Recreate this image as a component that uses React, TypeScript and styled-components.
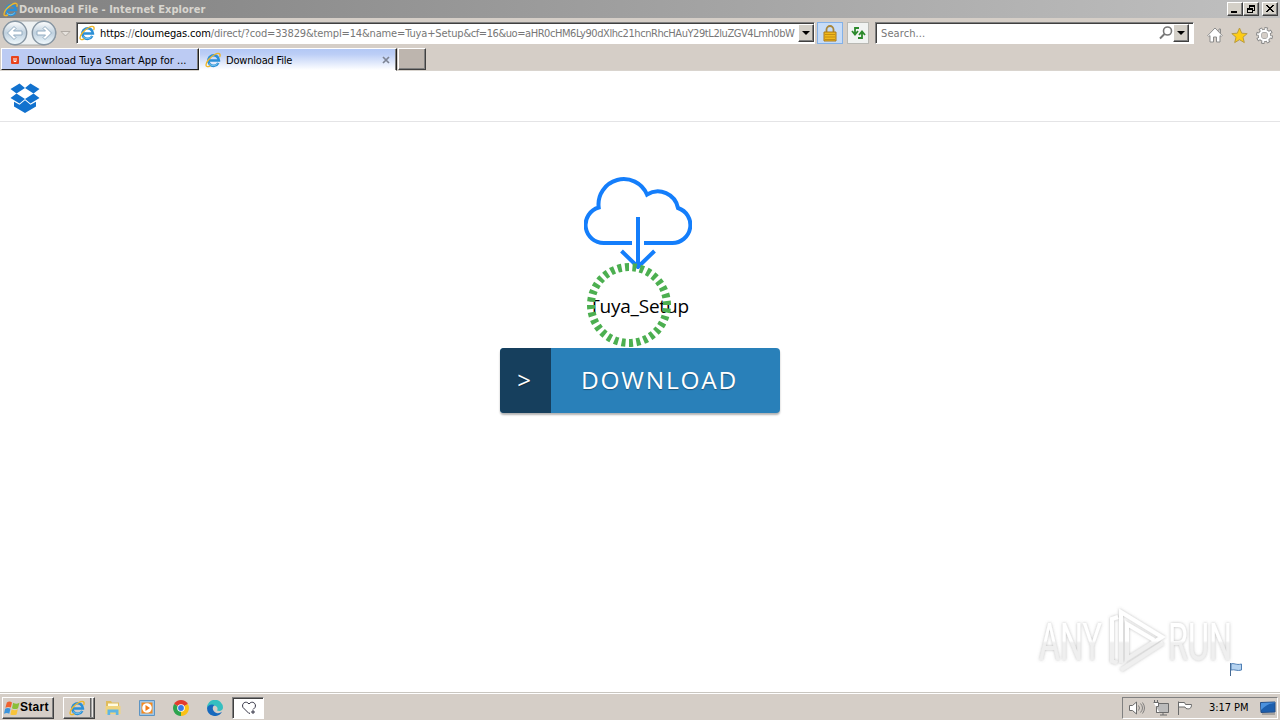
import { ReactNode } from 'react';
import styled, { createGlobalStyle, css } from 'styled-components';

type $TextProps = {
  size?: number;
  spacing?: number;
  color?: string;
  bold?: boolean;
};

const GlobalStyle = createGlobalStyle`
  * {
    box-sizing: border-box;
  }
  body {
    margin: 0;
    overflow: hidden;
    background: #fff;
    font-family: 'DejaVu Sans Condensed', 'DejaVu Sans', sans-serif;
    font-size: 11px;
  }
  svg {
    display: block;
    flex-shrink: 0;
  }
`;

const raised = css`
  border: 1px solid;
  border-color: #fff #404040 #404040 #fff;
  box-shadow: inset -1px -1px 0 #808080;
`;

const sunken = css`
  border: 1px solid;
  border-color: #808080 #fff #fff #808080;
  box-shadow: inset 1px 1px 0 #404040;
`;

const Screen = styled.div`
  display: flex;
  flex-direction: column;
  width: 1280px;
  height: 720px;
  overflow: hidden;
`;

const Label = styled.span.withConfig({
  shouldForwardProp: (prop) => !['size', 'spacing', 'color', 'bold'].includes(prop)
})<$TextProps>`
  font-size: ${({ size = 11 }) => size}px;
  letter-spacing: ${({ spacing = 0 }) => spacing}px;
  color: ${({ color = '#000' }) => color};
  font-weight: ${({ bold }) => (bold ? 700 : 400)};
  white-space: pre;
`;

/* window chrome */
const TitleBar = styled.header`
  display: flex;
  align-items: center;
  height: 18px;
  padding: 0 2px 0 3px;
  background: linear-gradient(90deg, #808080, #c0c0c0);
`;

const TitleText = styled.h1`
  flex: 1;
  margin: 0 0 0 1px;
  font-size: 11px;
  font-weight: 700;
  letter-spacing: 0.02px;
  color: #d8d5cf;
`;

const WindowButton = styled.button<{ $gap?: number }>`
  ${raised}
  display: flex;
  align-items: center;
  justify-content: center;
  width: 16px;
  height: 14px;
  margin: 0 0 0 ${({ $gap = 0 }) => $gap}px;
  padding: 0;
  background: #d4d0c8;
`;

const Toolbar = styled.div`
  display: flex;
  align-items: center;
  height: 30px;
  padding: 0 7px 0 1px;
  background: #d5cec7;
`;

const NavButtons = styled.div`
  display: flex;
  width: 75px;
`;

const Field = styled.div<{ $width: number; $gap?: number }>`
  ${sunken}
  display: flex;
  align-items: center;
  width: ${({ $width }) => $width}px;
  height: 22px;
  margin-left: ${({ $gap = 0 }) => $gap}px;
  padding: 0 0 0 2px;
  background: #fff;
`;

const FieldText = styled.div<{ $inset?: number }>`
  flex: 1;
  min-width: 0;
  margin-left: ${({ $inset = 5 }) => $inset}px;
  padding-top: 1px;
  white-space: nowrap;
`;

const DropButton = styled.button<{ $gap?: number }>`
  ${raised}
  display: flex;
  align-items: center;
  justify-content: center;
  width: 16px;
  height: 18px;
  margin: 0 ${({ $gap = 0 }) => $gap}px 0 0;
  padding: 0;
  background: #d4d0c8;
`;

const IconBox = styled.div<{ $active?: boolean }>`
  display: flex;
  align-items: center;
  justify-content: center;
  width: ${({ $active }) => ($active ? 26 : 22)}px;
  height: 22px;
  margin-left: ${({ $active }) => ($active ? 2 : 4)}px;
  border: 1px solid ${({ $active }) => ($active ? '#83b1e8' : '#b9b9b4')};
  background: ${({ $active }) => ($active ? '#c7dcf7' : '#f1f3f2')};
`;

const ToolIcons = styled.div`
  display: flex;
  flex: 1;
  justify-content: space-between;
  margin-left: 13px;
  padding-top: 4px;
`;

const TabStrip = styled.nav`
  display: flex;
  align-items: flex-start;
  height: 23px;
  padding-left: 1px;
  background: #d5cec7;
  border-bottom: 1px solid #d9d4ce;
`;

const Tab = styled.div<{ $width: number; $active?: boolean }>`
  display: flex;
  align-items: center;
  width: ${({ $width }) => $width}px;
  height: ${({ $active }) => ($active ? 23 : 22)}px;
  padding: 1px 6px 0 ${({ $active }) => ($active ? 5 : 4)}px;
  border: 1px solid;
  border-color: #fff #202020 ${({ $active }) => ($active ? '#fff' : '#202020')} #fff;
  box-shadow: inset -1px 0 0 #808080;
  background: ${({ $active }) =>
    $active ? 'linear-gradient(#b3c8f5 0%, #bccef6 25%, #edf2fd 80%, #fff 100%)' : '#bccbf3'};
`;

const TabText = styled(Label)`
  flex: 1;
  margin-left: 5px;
  padding-top: 1px;
`;

const NewTab = styled.div`
  ${raised}
  width: 28px;
  height: 22px;
  margin-left: 1px;
  background: #bdb5ae;
`;

/* page */
const Page = styled.main`
  position: relative;
  display: flex;
  flex: 1;
  flex-direction: column;
  align-items: center;
  background: #fff;
`;

const PageHeader = styled.div`
  align-self: stretch;
  height: 51px;
  padding: 12px 10px;
  border-bottom: 1px solid #e4e4e6;
`;

const CloudWrap = styled.div`
  margin: 53px 4px 0 0;
`;

const FileName = styled.h2`
  margin: 23px 2px 0 0;
  height: 28px;
  font: 400 19px/28px 'Open Sans', sans-serif;
  letter-spacing: -0.2px;
  color: #000;
`;

const DownloadButton = styled.button`
  display: flex;
  width: 280px;
  height: 65px;
  margin-top: 28px;
  padding: 0;
  border: 0;
  border-radius: 4px;
  background: #2980b9;
  box-shadow: 0 2px 2px rgba(0, 0, 0, 0.3);
  color: #fff;
  font: 400 24px/64px 'Open Sans', sans-serif;
  text-shadow: 0 1px 1px rgba(0, 0, 0, 0.35);
  overflow: hidden;
`;

const Chevron = styled.span`
  width: 51px;
  height: 65px;
  padding-right: 3px;
  background: #163f5d;
  text-align: center;
`;

const ButtonText = styled.span`
  padding-left: 30px;
  font-size: 24.5px;
  letter-spacing: 1.75px;
`;

const Ring = styled.div`
  position: absolute;
  top: 191px;
  left: 586px;
`;

const Watermark = styled.div`
  position: absolute;
  top: 533px;
  left: 1030px;
`;

const PageFlag = styled.div`
  position: absolute;
  top: 591px;
  left: 1229px;
`;

/* taskbar */
const Taskbar = styled.footer`
  display: flex;
  align-items: center;
  height: 28px;
  padding: 2px 2px 0;
  border-top: 1px solid #c9c6c0;
  box-shadow: inset 0 1px 0 #fff;
  background: #d5cec7;
`;

const StartButton = styled.button`
  ${raised}
  display: flex;
  align-items: center;
  width: 52px;
  height: 22px;
  padding: 0 2px 1px 1px;
  background: #d5cec7;
`;

const TaskGroup = styled.div`
  ${raised}
  display: flex;
  align-items: center;
  width: 32px;
  height: 22px;
  margin-left: 9px;
  margin-right: 1px;
  padding-left: 5px;
  background: linear-gradient(90deg, #d5cec7 26px, #808080 26px, #404040 27px, #fff 28px, #d5cec7 29px);
`;

const Launcher = styled.div`
  display: flex;
  align-items: center;
  justify-content: center;
  width: 34px;
`;

const ActiveTask = styled.div`
  ${sunken}
  display: flex;
  align-items: center;
  justify-content: center;
  width: 32px;
  height: 22px;
  padding-left: 1px;
  background: #fff;
`;

const Tray = styled.div`
  display: flex;
  align-items: center;
  width: 156px;
  height: 22px;
  margin-left: auto;
  padding-left: 6px;
  border: 1px solid;
  border-color: #808080 #fff #fff #808080;
`;

const Clock = styled.time`
  margin: 0 11px 0 14px;
  letter-spacing: -0.05px;
  white-space: nowrap;
`;

const IeIcon = ({ size = 16 }: { size?: number }) => (
  <svg width={size} height={size} viewBox="0 0 16 16" fill="none">
    <path d="M13.300 11a5.300 5.300 0 1 1 .6-2.500H4.200" stroke="#2b8fd6" strokeWidth="2.600" />
    <path d="M12.600 11.300A5.300 5.300 0 0 1 4 11.500" stroke="#7fcdf3" strokeWidth=".9" />
    <path d="M14.700 5C16 1.500 13.800.2 9.800 2.500 5 5 1.200 9.800 1 13c0 2 2 2 4.300.8" stroke="#efb72b" strokeWidth="1.400" />
  </svg>
);

const NavArrow = ({ flip }: { flip?: boolean }) => (
  <g transform={flip ? 'translate(57 0) scale(-1 1)' : undefined}>
    <circle cx="14" cy="13" r="11.700" fill="url(#glass)" stroke="#8796a3" strokeWidth="1.400" />
    <path
      d="M6.500 13l6.500-6.500 2 2-2.500 2.500H21v4h-8.500l2.500 2.500-2 2z"
      fill="#fff"
      stroke="#93adc2"
      strokeWidth="1"
    />
  </g>
);

const DownArrow = () => (
  <svg width="8" height="4" viewBox="0 0 8 4">
    <path d="M0 0h8L4 4z" fill="#000" />
  </svg>
);

const WinButton = ({ gap, children }: { gap?: number; children: ReactNode }) => (
  <WindowButton $gap={gap}>
    <svg width="12" height="10" viewBox="0 0 12 10" shapeRendering="crispEdges">
      {children}
    </svg>
  </WindowButton>
);

const App = () => (
  <Screen>
    <GlobalStyle />
    <TitleBar>
      <IeIcon size={15} />
      <TitleText>Download File - Internet Explorer</TitleText>
      <WinButton>
        <path d="M2 7h6v2H2z" />
      </WinButton>
      <WinButton>
        <path d="M4 1h6v2H4zM9 3h1v4H8V6h1zM4 3h1v1H4zM2 4h6v2H2zM2 6h1v3H2zM7 6h1v3H7zM2 8h6v1H2z" />
      </WinButton>
      <WinButton gap={3}>
        <path d="M2 1h2v1h1v1h2V2h1V1h2v1H9v1H8v1H7v1h1v1h1v1h1v1H8V7H7V6H5v1H4v1H2V7h1V6h1V5h1V4H4V3H3V2H2z" />
      </WinButton>
    </TitleBar>

    <Toolbar>
      <NavButtons>
        <svg width="70" height="27" viewBox="0 0 70 27">
          <defs>
            <linearGradient id="glass" x1="0" y1="0" x2="0" y2="1">
              <stop offset="0" stopColor="#fff" />
              <stop offset=".5" stopColor="#bfd0de" />
              <stop offset="1" stopColor="#f2fbff" />
            </linearGradient>
          </defs>
          <path d="M14 1h29a12 12 0 0 1 0 24H14A12 12 0 0 1 14 1z" fill="#eef1f2" stroke="#a9aaa8" />
          <NavArrow />
          <NavArrow flip />
          <path d="M60 11.500h9l-4.500 4.500z" fill="#e6e2dd" stroke="#aaa59e" strokeWidth=".9" />
        </svg>
      </NavButtons>
      <Field $width={739}>
        <IeIcon />
        <FieldText>
          <Label spacing={-0.12}>https</Label>
          <Label spacing={-0.12} color="#777">
            ://
          </Label>
          <Label spacing={-0.14}>cloumegas.com</Label>
          <Label spacing={-0.14} color="#777">
            /direct/?cod=33829&amp;templ=14&amp;name=Tuya+Setup
          </Label>
          <Label spacing={-0.43} color="#777">
            &amp;cf=16&amp;uo=aHR0cHM6Ly90dXlhc21hcnRhcHAuY29tL2luZGV4Lmh0bW
          </Label>
        </FieldText>
        <DropButton>
          <DownArrow />
        </DropButton>
      </Field>
      <IconBox $active>
        <svg width="14" height="17" viewBox="0 0 14 17">
          <path d="M3.500 8V4.500a3.500 3.500 0 0 1 7 0V8" fill="none" stroke="#a8863a" strokeWidth="1.800" />
          <path d="M1 7h12v9H1z" fill="#f0b91d" stroke="#a9791a" />
          <path d="M2 9.500h10M2 12h10M2 14.500h10" stroke="#c58e12" />
        </svg>
      </IconBox>
      <IconBox>
        <svg width="17" height="16" viewBox="0 0 17 16" fill="none" stroke="#2c8a2c" strokeWidth="1.800">
          <path d="M9 3H5v6M2 6l3 3.500L8 6" />
          <path d="M8 13h4V7M9 10l3-3.500L15 10" />
        </svg>
      </IconBox>
      <Field $width={319} $gap={6}>
        <FieldText $inset={3}>
          <Label color="#777" spacing={0.1}>
            Search...
          </Label>
        </FieldText>
        <svg width="14" height="14" viewBox="0 0 14 14" fill="none" stroke="#777" strokeWidth="1.600">
          <circle cx="8.500" cy="5" r="4" />
          <path d="M5.500 8L1 12.500" strokeWidth="2" />
        </svg>
        <DropButton $gap={4}>
          <DownArrow />
        </DropButton>
      </Field>
      <ToolIcons>
        <svg width="16" height="16" viewBox="0 0 16 16" fill="#fff" stroke="#8b8b8b">
          <path d="M12 5V2h1.500v5" />
          <path d="M.8 8.500L8 1l7.200 7.500-1 1L13 8.600V15H9.500v-5h-3v5H3V8.600L1.800 9.500z" />
        </svg>
        <svg width="17" height="17" viewBox="0 0 17 17">
          <path
            d="M8.500 1l2.200 5.200 5.500.4-4.200 3.600 1.300 5.400-4.800-2.900-4.800 2.900L5 10.200.8 6.600l5.500-.4z"
            fill="#fdcc15"
            stroke="#b89b42"
          />
        </svg>
        <svg width="17" height="17" viewBox="0 0 17 17" fill="none">
          <circle cx="8.500" cy="8.500" r="6.500" stroke="#888" strokeWidth="4" pathLength="80" strokeDasharray="6 4" />
          <circle cx="8.500" cy="8.500" r="4.800" stroke="#888" strokeWidth="3.600" />
          <circle
            cx="8.500"
            cy="8.500"
            r="6"
            stroke="#fff"
            strokeWidth="3"
            pathLength="80"
            strokeDasharray="3.400 6.600"
            strokeDashoffset="-1.300"
          />
          <circle cx="8.500" cy="8.500" r="4.600" stroke="#fff" strokeWidth="2.400" />
        </svg>
      </ToolIcons>
    </Toolbar>

    <TabStrip>
      <Tab $width={198}>
        <svg width="16" height="8" viewBox="-5 0 16 8">
          <rect width="8" height="8" rx="1" fill="#e8431c" />
          <path d="M3 2v3.500h2V2" fill="none" stroke="#fff" />
        </svg>
        <TabText spacing={-0.01}>Download Tuya Smart App for ...</TabText>
      </Tab>
      <Tab $width={198} $active>
        <IeIcon />
        <TabText spacing={-0.2}>Download File</TabText>
        <svg width="8" height="8" viewBox="0 0 8 8">
          <path d="M1 1l6 6M7 1L1 7" stroke="#7d8494" strokeWidth="1.700" />
        </svg>
      </Tab>
      <NewTab />
    </TabStrip>

    <Page>
      <PageHeader>
        <svg width="30" height="30" viewBox="0 0 30 30" fill="#1272ce">
          <path d="M9.500.5L15 5l-8.500 5.500L.5 6zM20.500.5L15 5l8.500 5.500 6-4.500z" />
          <path d="M6.500 10.500L15 16l-5.500 4.500L.5 15zM23.500 10.500L15 16l5.500 4.500 9-5.500z" />
          <path d="M15 17.300l-5.500 4.500L4 18.800v4.700l11 6.500 11-6.500v-4.700l-5.500 3z" />
        </svg>
      </PageHeader>
      <CloudWrap>
        <svg width="108" height="94" viewBox="584 175 108 94" fill="none" stroke="#147efb" strokeWidth="4">
          <path d="M632 243H604A18.100 18.100 0 0 1 598.700 207.500A25.250 25.250 0 0 1 647 194.500A20.500 20.500 0 0 1 678 208A17.950 17.950 0 0 1 672 243H644" />
          <path d="M638 217v49M621.500 251L638 267l16.500-16" />
        </svg>
      </CloudWrap>
      <FileName>Tuya_Setup</FileName>
      <DownloadButton>
        <Chevron>&gt;</Chevron>
        <ButtonText>DOWNLOAD</ButtonText>
      </DownloadButton>
      <Ring>
        <svg width="86" height="86" viewBox="0 0 86 86">
          <circle
            cx="43"
            cy="43"
            r="38"
            fill="none"
            stroke="#4caf50"
            strokeWidth="8"
            pathLength="320"
            strokeDasharray="5.400 4.600"
            transform="rotate(-6 43 43)"
          />
        </svg>
      </Ring>
      <Watermark>
        <svg width="220" height="75" viewBox="0 0 220 75">
          <defs>
            <filter id="soft" x="-10%" y="-20%" width="120%" height="140%">
              <feDropShadow dx="0" dy="0" stdDeviation="1.500" floodColor="#777" floodOpacity=".5" />
            </filter>
            <linearGradient id="fade" x1="0" y1="0" x2="0" y2="75" gradientUnits="userSpaceOnUse">
              <stop offset=".49" stopColor="#fff" />
              <stop offset=".52" stopColor="#efefef" />
            </linearGradient>
          </defs>
          <g filter="url(#soft)" fill="url(#fade)" fontFamily="Roboto, sans-serif" fontSize="52">
            <text x="9" y="56" textLength="63" lengthAdjust="spacingAndGlyphs">
              ANY
            </text>
            <text x="138" y="56" textLength="64" lengthAdjust="spacingAndGlyphs">
              RUN
            </text>
            <g fill="none" stroke="url(#fade)" strokeWidth="4">
              <path d="M88 13l-6 2v42l5 2" />
              <path d="M91 59V8l41 25L97 55V20l27 16" />
              <path d="M91 66l42-27" />
            </g>
          </g>
        </svg>
      </Watermark>
      <PageFlag>
        <svg width="14" height="15" viewBox="0 0 14 15">
          <path d="M2 2c3-1.500 5 1.500 10.500 0v6C8 9.500 6 7 2 8z" fill="#b5d3f0" stroke="#4f7fb5" />
          <path d="M1.500 1v13" stroke="#456a94" />
        </svg>
      </PageFlag>
    </Page>

    <Taskbar>
      <StartButton>
        <svg width="16" height="16" viewBox="0 0 14 14">
          <path d="M2.500 3C4 2 5.500 2 7 3L6 7.500C4.500 6.700 3 6.700 1.200 7.600z" fill="#ef6330" />
          <path d="M8 3.300c2 1 3.500 1 5.500 0L12.300 8c-1.800 1-3.500 1-5.300 0z" fill="#8abf38" />
          <path d="M1 8.500c1.600-.9 3.200-.9 4.700 0L4.600 13C3.200 12 1.700 12 0 13z" fill="#3b94dc" />
          <path d="M6.700 9c1.800 1 3.500 1 5.400 0L11 13.500c-1.900 1-3.600 1-5.400 0z" fill="#f9c43a" />
        </svg>
        <Label size={12} bold spacing={0.3}>
          Start
        </Label>
      </StartButton>
      <TaskGroup>
        <IeIcon />
      </TaskGroup>
      <Launcher>
        <svg width="16" height="16" viewBox="0 0 16 16">
          <path d="M1 1h5l1 1.500h7V14H1z" fill="#e0bc5c" />
          <path d="M3 3.500h10v4H3z" fill="#fffbe2" />
          <path d="M.5 6h15v8H.5z" fill="#f0d47e" />
          <path d="M2.500 15v-5.500h11V15h-2.700v-2.500H5.200V15z" fill="#5eb5e3" />
        </svg>
      </Launcher>
      <Launcher>
        <svg width="16" height="16" viewBox="0 0 16 16">
          <path d="M.5.500h15v15H.5z" fill="#9dc6e8" stroke="#5d94c3" />
          <path d="M2.500 2.500h11v11h-11z" fill="#f58a1f" />
          <circle cx="8" cy="8" r="4.800" fill="#fff" />
          <path d="M6.500 5l4.500 3-4.500 3z" fill="#f27b13" />
        </svg>
      </Launcher>
      <Launcher>
        <svg width="16" height="16" viewBox="0 0 16 16">
          <path d="M8 8L1.100 4a8 8 0 0 1 13.800 0z" fill="#e33b2e" />
          <path d="M8 8l6.900-4A8 8 0 0 1 8 16z" fill="#fbc116" />
          <path d="M8 8v8A8 8 0 0 1 1.100 4z" fill="#2da44e" />
          <circle cx="8" cy="8" r="3.800" fill="#fff" />
          <circle cx="8" cy="8" r="2.900" fill="#3979e8" />
        </svg>
      </Launcher>
      <Launcher>
        <svg width="16" height="16" viewBox="0 0 16 16">
          <path d="M0 8a8 8 0 0 1 16-.5c0 3-3 4-6 3 1.500-2 0-5-3.500-5S1 7 0 8z" fill="#36bfc0" />
          <path d="M0 8c1-3 4.500-4.500 7.500-3-3 2-2 7 2 8 2 .5 4 0 5.500-1.200A8 8 0 0 1 0 8z" fill="#1769bd" />
        </svg>
      </Launcher>
      <ActiveTask>
        <svg width="16" height="15" viewBox="0 0 16 15" fill="none" stroke="#334" strokeWidth="1">
          <path d="M9 13l-1 .5L2 7.500c-2-4 3-7.500 6-3.500 3-4 8-.5 6 3.500l-2 2" />
          <path d="M12 10v4M10 12h4" />
        </svg>
      </ActiveTask>
      <Tray>
        <svg width="66" height="16" viewBox="0 0 66 16" fill="#fff" stroke="#6b6b6b">
          <path d="M.5 5.500h3L7.500 2v12l-4-3.500h-3z" />
          <path d="M9.500 5.500q2 2.500 0 5M11.500 3.500q4 4.500 0 9M13.500 2.500q4 5.500 0 11" fill="none" strokeWidth=".8" />
          <path d="M27.500 3.500h12v9h-12zM31 15h7M34 12.500V15" fill="#bbb" />
          <path d="M24.500 2.500h5v4h-2v6h3M25.500 2.500V0M28.500 2.500V0" />
          <path d="M49.500 15V1.500M49.500 2.500h6l1 2h6c0 4-2 5-5.500 4l-1-1.500h-6" />
        </svg>
        <Clock>3:17 PM</Clock>
        <svg width="16" height="14" viewBox="0 0 16 14">
          <path d="M.5 1.500L15 1v10L1 11.500z" fill="#1d5fae" stroke="#244e86" />
          <path d="M1 9q7-7 14-7V1.500L1 2z" fill="#4b91dd" />
          <path d="M2 13h13" stroke="#777" />
        </svg>
      </Tray>
    </Taskbar>
  </Screen>
);

export default App;
